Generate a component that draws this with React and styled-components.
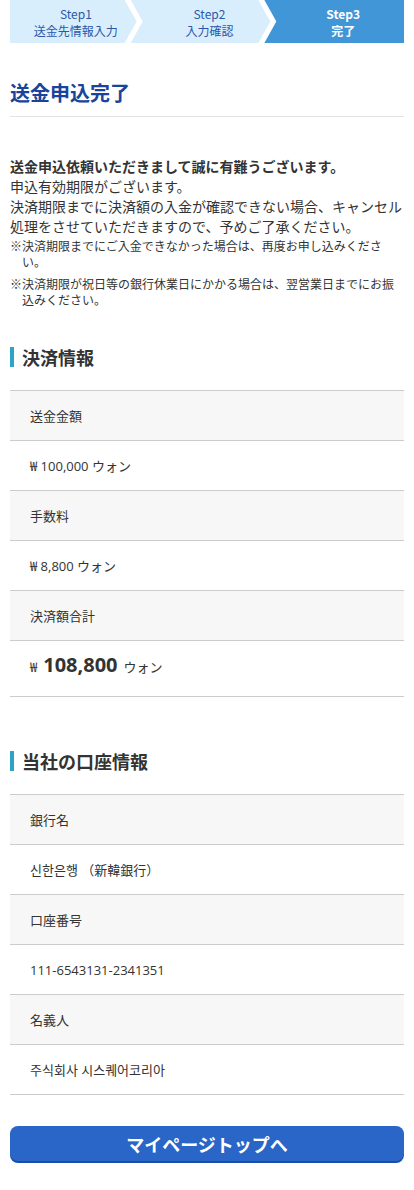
import React from "react";
import styled, { createGlobalStyle } from "styled-components";

const steps = [
    { no: "Step1", label: "送金先情報入力" },
    { no: "Step2", label: "入力確認" },
    { no: "Step3", label: "完了" },
];

const payment = [
    { label: "送金金額", value: "100,000" },
    { label: "手数料", value: "8,800" },
];

const account = [
    { label: "銀行名", value: "신한은행 （新韓銀行）" },
    { label: "口座番号", value: "111-6543131-2341351" },
    { label: "名義人", value: "주식회사 시스퀘어코리아" },
];

export default function App() {
    const current = 3;

    return (
        <>
            <GlobalStyle />
            <PAGE>
                <STEPS>
                    {steps.map((step, i) => (
                        <STEP key={step.no} $first={i === 0} $last={i === steps.length - 1} $active={i + 1 === current}>
                            <span>{step.no}</span>
                            <span>{step.label}</span>
                        </STEP>
                    ))}
                </STEPS>

                <TITLE>送金申込完了</TITLE>

                <MESSAGE>
                    <p className="lead">送金申込依頼いただきまして誠に有難うございます。</p>
                    <p>申込有効期限がございます。</p>
                    <p>決済期限までに決済額の入金が確認できない場合、キャンセル処理をさせていただきますので、予めご了承ください。</p>
                    <NOTE>※決済期限までにご入金できなかった場合は、再度お申し込みください。</NOTE>
                    <NOTE $gap>※決済期限が祝日等の銀行休業日にかかる場合は、翌営業日までにお振込みください。</NOTE>
                </MESSAGE>

                <HEADING $top={39}>決済情報</HEADING>
                <TABLE>
                    {payment.map((row) => (
                        <React.Fragment key={row.label}>
                            <ROW $label>{row.label}</ROW>
                            <ROW $value>₩&nbsp;{row.value} ウォン</ROW>
                        </React.Fragment>
                    ))}
                    <ROW $label>決済額合計</ROW>
                    <TOTAL>
                        <small>₩</small>
                        <strong>108,800</strong>
                        <small>ウォン</small>
                    </TOTAL>
                </TABLE>

                <HEADING $top={54}>当社の口座情報</HEADING>
                <TABLE>
                    {account.map((row) => (
                        <React.Fragment key={row.label}>
                            <ROW $label>{row.label}</ROW>
                            <ROW $value>{row.value}</ROW>
                        </React.Fragment>
                    ))}
                </TABLE>

                <BUTTON href="#">マイページトップへ</BUTTON>
            </PAGE>
        </>
    );
}

const GlobalStyle = createGlobalStyle`
    body {
        margin : 0;
        background : #ffffff;
        color : #333333;
        font-family : "Noto Sans CJK JP", "Noto Sans CJK KR", sans-serif;
    }
`;

const PAGE = styled.div`
    width : 414px;
    padding : 0 10px 27px;
    box-sizing : border-box;
`;

const STEPS = styled.div`
    display : flex;
    height : 43px;
`;

const STEP = styled.div`
    flex : 1;
    display : flex;
    flex-direction : column;
    align-items : center;
    justify-content : center;
    margin-left : ${(p) => (p.$first ? "0" : "-6px")};
    padding-left : ${(p) => (p.$first ? "5px" : "18px")};
    font-size : 12px;
    line-height : 17px;
    background : ${(p) => (p.$active ? "#4196d8" : "#d9eefc")};
    color : ${(p) => (p.$active ? "#ffffff" : "#2a58a8")};
    font-weight : ${(p) => (p.$active ? "bold" : "normal")};
    clip-path : ${(p) =>
        p.$last
            ? "polygon(0 0, 100% 0, 100% 100%, 0 100%, 12px 50%)"
            : p.$first
            ? "polygon(0 0, calc(100% - 12px) 0, 100% 50%, calc(100% - 12px) 100%, 0 100%)"
            : "polygon(0 0, calc(100% - 12px) 0, 100% 50%, calc(100% - 12px) 100%, 0 100%, 12px 50%)"};
`;

const TITLE = styled.h1`
    margin : 36px 0 0;
    padding-bottom : 9px;
    border-bottom : 1px solid #e3e3e3;
    font-size : 20px;
    line-height : 28px;
    font-weight : bold;
    color : #18449b;
`;

const MESSAGE = styled.div`
    margin-top : 39px;

    p {
        margin : 0;
        font-size : 14px;
        line-height : 20px;
    }

    p.lead {
        font-weight : bold;
    }
`;

const NOTE = styled.p`
    && {
        margin-top : ${(p) => (p.$gap ? "6px" : "2px")};
        padding-left : 1em;
        text-indent : -1em;
        font-size : 12px;
        line-height : 16px;
    }
`;

const HEADING = styled.h2`
    margin : ${(p) => p.$top}px 0 0;
    padding-left : 8px;
    border-left : 4px solid #2ea3c8;
    font-size : 18px;
    line-height : 20px;
    font-weight : bold;
    color : #333333;
`;

const TABLE = styled.div`
    margin-top : 23px;
    border-top : 1px solid #cccccc;
`;

const ROW = styled.div`
    display : flex;
    align-items : center;
    height : 49px;
    padding-left : 20px;
    border-bottom : 1px solid #cccccc;
    background : ${(p) => (p.$label ? "#f7f7f7" : "#ffffff")};
    font-size : 13px;
    font-family : ${(p) => (p.$value ? `"Open Sans", "Noto Sans CJK JP", sans-serif` : "inherit")};
`;

const TOTAL = styled.div`
    display : flex;
    align-items : baseline;
    gap : 6px;
    height : 56px;
    padding : 10px 0 0 20px;
    box-sizing : border-box;
    border-bottom : 1px solid #cccccc;
    font-family : "Open Sans", "Noto Sans CJK JP", sans-serif;

    small {
        font-size : 13px;
    }

    strong {
        font-size : 20px;
        font-weight : bold;
    }
`;

const BUTTON = styled.a`
    display : flex;
    align-items : center;
    justify-content : center;
    margin-top : 31px;
    height : 35px;
    border-radius : 8px;
    background : #2a65c8;
    box-shadow : 0 2px 0 #1a4ea6;
    color : #ffffff;
    font-size : 18px;
    font-weight : bold;
    text-decoration : none;
`;
